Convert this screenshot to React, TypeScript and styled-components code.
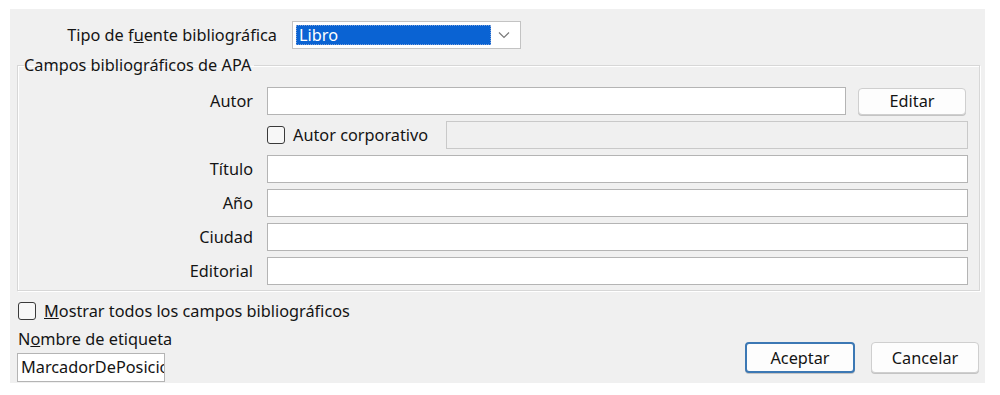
import React from 'react'
import styled, { createGlobalStyle } from 'styled-components'

const GlobalStyle = createGlobalStyle`
    body {
        margin: 0;
        background: #ffffff;
        font-family: "Noto Sans", "Open Sans", sans-serif;
        font-size: 16.3px;
        line-height: 20px;
        color: #141414;
    }
    * {
        box-sizing: border-box;
    }
`

export const Dialog = styled.div`
    margin: 9px 0 0 10px;
    width: 975px;
    height: 374px;
    padding: 12px 5px 0 7px;
    background-color: #f0f0f0;
    display: flex;
    flex-direction: column;
    overflow: hidden;
`

export const TopRow = styled.div`
    display: flex;
    align-items: center;
`

export const TopLabel = styled.label`
    width: 260px;
    margin-right: 15px;
    text-align: right;
    white-space: nowrap;
`

export const Select = styled.div`
    width: 229px;
    height: 28px;
    padding: 3px;
    display: flex;
    align-items: center;
    background: #ffffff;
    border: 1px solid #c3c3c3;
`

export const SelectValue = styled.span`
    flex: 1;
    height: 20px;
    line-height: 18px;
    padding-left: 2px;
    color: #ffffff;
    background: #0a63d3;
    border: 1px dotted #7a9fd8;
`

export const Chevron = styled.span`
    width: 26px;
    display: flex;
    justify-content: center;
    color: #7a7a7a;
`

export const GroupBox = styled.fieldset`
    margin: 7px 0 0 0;
    width: 963px;
    padding: 13px 11px 5px 0;
    border: 1px solid #d7d7d7;
    box-shadow: inset 1px 1px 0 #ffffff, 1px 1px 0 #ffffff;
`

export const Legend = styled.legend`
    padding: 0 3px 0 0;
    margin-left: 6px;
    line-height: 18px;
`

export const FieldGrid = styled.div`
    display: grid;
    grid-template-columns: 235px 1fr;
    grid-auto-rows: 28px;
    column-gap: 14px;
    row-gap: 6px;
    align-items: center;
`

export const FieldLabel = styled.label`
    text-align: right;
`

export const TextInput = styled.div<{ $disabled?: boolean }>`
    height: 28px;
    flex: 1;
    width: 100%;
    background: ${p => (p.$disabled ? '#f0f0f0' : '#ffffff')};
    border: 1px solid ${p => (p.$disabled ? '#c9c9c9' : '#b4b4b4')};
`

export const InlineRow = styled.div<{ $gap: number }>`
    display: flex;
    align-items: center;
    gap: ${p => p.$gap}px;
    height: 28px;
`

export const CheckLabel = styled.label`
    display: flex;
    align-items: center;
    gap: 8px;
    white-space: nowrap;
`

export const Box = styled.span`
    width: 18px;
    height: 18px;
    flex-shrink: 0;
    border: 1px solid #3a3a3a;
    border-radius: 3px;
    background: #f7f7f7;
`

export const Button = styled.button<{ $primary?: boolean; $tall?: boolean }>`
    height: ${p => (p.$tall ? '31px' : '27px')};
    width: ${p => (p.$primary ? '110px' : '108px')};
    margin-right: ${p => (p.$tall ? '0' : '2px')};
    font: inherit;
    color: #141414;
    background: #fdfdfd;
    border: ${p => (p.$primary ? '2px solid #3c78b4' : '1px solid #cfcfcf')};
    border-radius: 4px;
    box-shadow: 0 1px 0 #c4c4c4;
    flex-shrink: 0;
`

export const Footer = styled.div`
    margin-top: 10px;
    display: flex;
    justify-content: space-between;
    align-items: flex-end;
    flex: 1;
`

export const FooterLeft = styled.div`
    display: flex;
    flex-direction: column;
    padding-left: 1px;
`

export const FooterText = styled.span<{ $top: number }>`
    margin-top: ${p => p.$top}px;
`

export const NameInput = styled.div`
    width: 148px;
    height: 29px;
    margin: 4px 0 1px -1px;
    padding: 3px 0 0 3px;
    overflow: hidden;
    white-space: nowrap;
    background: #ffffff;
    border: 1px solid #b4b4b4;
`

export const ButtonGroup = styled.div`
    display: flex;
    gap: 16px;
    margin: 0 1px 10px 0;
`

const ChevronIcon = () => (
    <svg width="12" height="8" viewBox="0 0 12 8">
        <path d="M1 1.5 L6 6.5 L11 1.5" fill="none" stroke="currentColor" strokeWidth="1.2" />
    </svg>
)

const Field = ({ label }: { label: string }) => (
    <>
        <FieldLabel>{label}</FieldLabel>
        <TextInput />
    </>
)

const App = () => {
    return (
        <>
            <GlobalStyle />
            <Dialog>
                <TopRow>
                    <TopLabel>Tipo de f<u>u</u>ente bibliográfica</TopLabel>
                    <Select>
                        <SelectValue>Libro</SelectValue>
                        <Chevron><ChevronIcon /></Chevron>
                    </Select>
                </TopRow>
                <GroupBox>
                    <Legend>Campos bibliográficos de APA</Legend>
                    <FieldGrid>
                        <FieldLabel>Autor</FieldLabel>
                        <InlineRow $gap={12}>
                            <TextInput />
                            <Button>Editar</Button>
                        </InlineRow>
                        <span />
                        <InlineRow $gap={18}>
                            <CheckLabel>
                                <Box />
                                Autor corporativo
                            </CheckLabel>
                            <TextInput $disabled />
                        </InlineRow>
                        <Field label="Título" />
                        <Field label="Año" />
                        <Field label="Ciudad" />
                        <Field label="Editorial" />
                    </FieldGrid>
                </GroupBox>
                <Footer>
                    <FooterLeft>
                        <CheckLabel>
                            <Box />
                            <span><u>M</u>ostrar todos los campos bibliográficos</span>
                        </CheckLabel>
                        <FooterText $top={8}>N<u>o</u>mbre de etiqueta</FooterText>
                        <NameInput>MarcadorDePosicio</NameInput>
                    </FooterLeft>
                    <ButtonGroup>
                        <Button $primary $tall>Aceptar</Button>
                        <Button $tall>Cancelar</Button>
                    </ButtonGroup>
                </Footer>
            </Dialog>
        </>
    )
}

export default App
